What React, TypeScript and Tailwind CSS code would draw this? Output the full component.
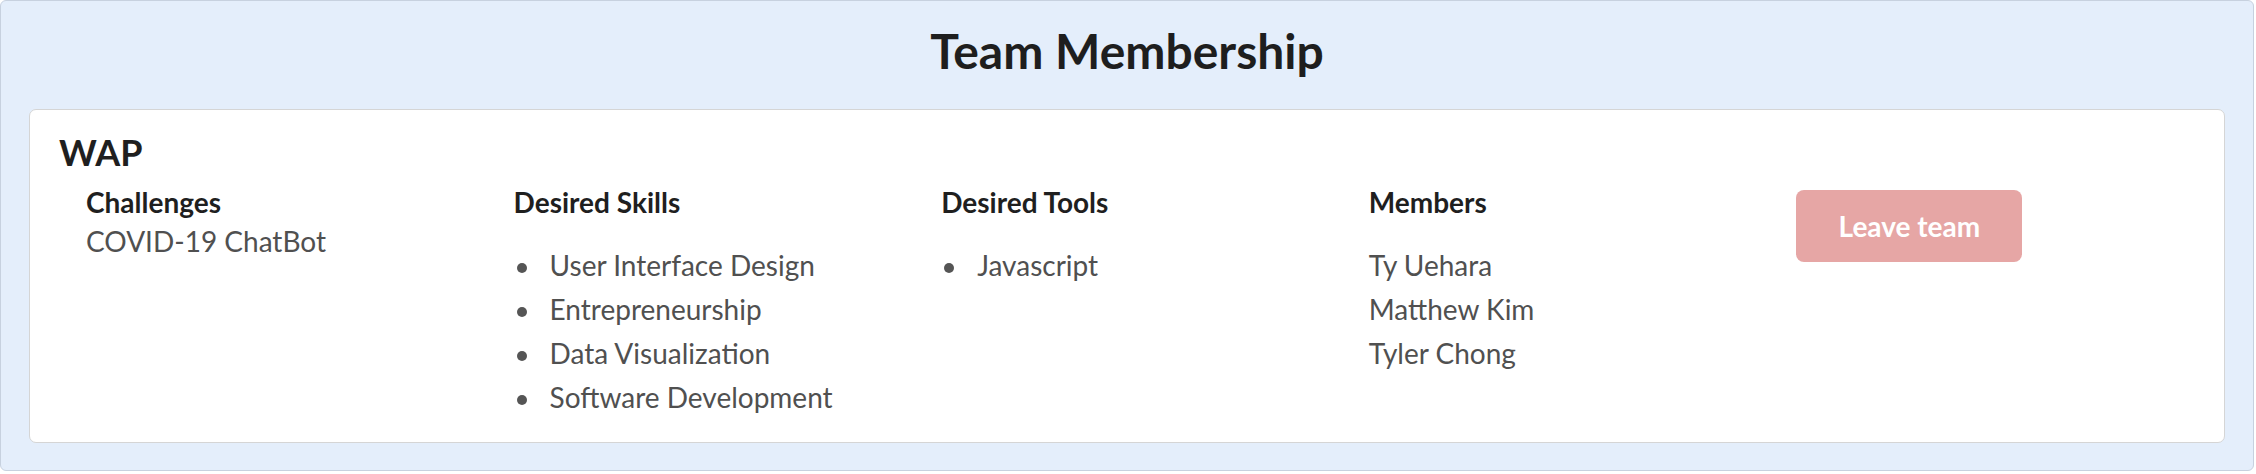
import React from 'react'

const skills = ['User Interface Design', 'Entrepreneurship', 'Data Visualization', 'Software Development']
const tools = ['Javascript']
const members = ['Ty Uehara', 'Matthew Kim', 'Tyler Chong']

const font = { fontFamily: 'Lato, "Open Sans", sans-serif' }

const ColumnTitle = ({ children }: { children: React.ReactNode }) => (
    <h4 className="text-[28px] leading-[39px] font-bold text-[#1f1f1f]">{ children }</h4>
)

const BulletList = ({ items }: { items: string[] }) => (
    <ul className="mt-[21px] text-[28px] leading-[44px] text-[#505050]">
        {
            items.map( item => (
                <li key={ item } className="flex">
                    <span className="mt-[20px] ml-[3px] mr-[23px] w-[10px] h-[10px] rounded-full bg-[#555] shrink-0" />
                    { item }
                </li>
            ))
        }
    </ul>
)

export default function App() {
    return (
        <div style={ font } className="w-[2254px] bg-[#e4eefb] border border-[#c7d1df] rounded-md pt-[20px] pb-[27px]">
            <h1 className="text-center text-[48px] leading-[60px] font-bold text-[#1e1e1e]">Team Membership</h1>

            <div className="mx-[28px] mt-[28px] bg-white border border-[#d5d5d5] rounded-[7px] pt-[22px] pb-[23px]">
                <h3 className="pl-[29px] text-[36px] leading-[41px] font-bold text-[#1f1f1f]">WAP</h3>

                <div className="grid grid-cols-5 pl-[56px] mt-[10px]">
                    <div>
                        <ColumnTitle>Challenges</ColumnTitle>
                        <p className="text-[28px] leading-[39px] text-[#505050]">COVID-19 ChatBot</p>
                    </div>
                    <div>
                        <ColumnTitle>Desired Skills</ColumnTitle>
                        <BulletList items={ skills } />
                    </div>
                    <div>
                        <ColumnTitle>Desired Tools</ColumnTitle>
                        <BulletList items={ tools } />
                    </div>
                    <div>
                        <ColumnTitle>Members</ColumnTitle>
                        <ul className="mt-[21px] text-[28px] leading-[44px] text-[#505050]">
                            {
                                members.map( member => (
                                    <li key={ member }>{ member }</li>
                                ))
                            }
                        </ul>
                    </div>
                    <div>
                        <button
                            className="mt-[7px] w-[226px] h-[72px] rounded-[8px] bg-[#e6a6a5] text-white text-[28px] font-bold flex items-center justify-center"
                        >
                            Leave team
                        </button>
                    </div>
                </div>
            </div>
        </div>
    )
}
